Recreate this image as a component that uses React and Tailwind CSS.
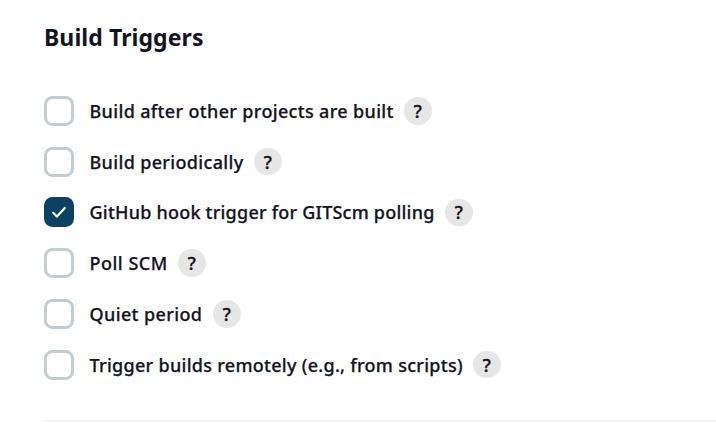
const triggers = [
  { label: "Build after other projects are built", box: "w-[313px] tracking-[0.34px]" },
  { label: "Build periodically", box: "w-[163px] tracking-[0.34px]" },
  { label: "GitHub hook trigger for GITScm polling", box: "w-[354px] tracking-[0.22px]", checked: true },
  { label: "Poll SCM", box: "w-[87px] tracking-[0.5px]" },
  { label: "Quiet period", box: "w-[122px] tracking-[0.38px]" },
  { label: "Trigger builds remotely (e.g., from scripts)", box: "w-[382px] tracking-[0.29px]" },
];

function Checkbox({ checked }) {
  return checked ? (
    <span className="flex size-[30px] shrink-0 items-center justify-center rounded-[8.5px] bg-[#0b4162]">
      <svg viewBox="0 0 30 30" className="size-[30px]" fill="none" stroke="#fff" strokeWidth="2.2" strokeLinecap="round" strokeLinejoin="round">
        <path d="M9.2 15.8 L12.9 19.5 L20.8 11" />
      </svg>
    </span>
  ) : (
    <span className="size-[30px] shrink-0 rounded-[8.5px] border-3 border-[#c3ccd1] bg-white" />
  );
}

function TriggerRow({ label, box, checked }) {
  return (
    <label className="flex h-[30px] items-center">
      <Checkbox checked={checked} />
      <span
        className={`ml-[15.5px] text-[18px] leading-[30px] font-medium whitespace-nowrap [-webkit-text-stroke:0.25px_#14141f] ${box}`}
      >
        {label}
      </span>
      <span className="ml-[1.5px] flex size-[27.5px] shrink-0 items-center justify-center rounded-full bg-[#e6e6e6] text-[18px] leading-none font-medium [-webkit-text-stroke:0.4px_#14141f]">
        ?
      </span>
    </label>
  );
}

export default function App() {
  return (
    <main className="h-[440px] overflow-hidden bg-white pt-[22px] pl-11 font-['Noto_Sans','Open_Sans',sans-serif] text-[#14141f]">
      <h1 className="h-[73.8px] text-[23px] leading-[31px] font-bold tracking-[0.08px]">Build Triggers</h1>
      <div className="flex flex-col gap-[20.75px]">
        {triggers.map((t) => (
          <TriggerRow key={t.label} {...t} />
        ))}
      </div>
      <hr className="mt-[40.4px] border-t-2 border-[#f3f3f8]" />
    </main>
  );
}
